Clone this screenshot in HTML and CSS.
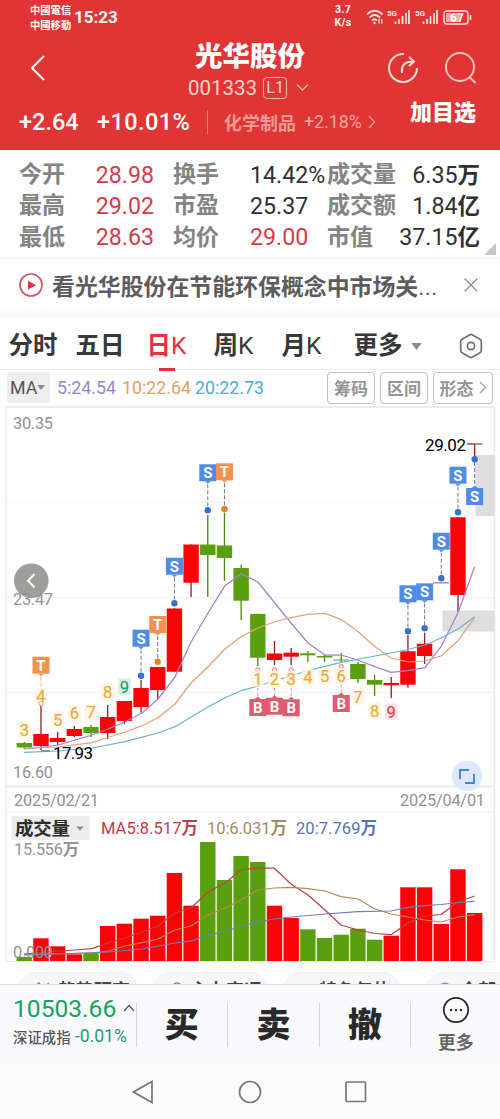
FILE: index.html
```html
<!DOCTYPE html>
<html lang="zh-CN">
<head>
<meta charset="utf-8">
<title>光华股份 001333</title>
<link rel="stylesheet" href="styles.css">
</head>
<body>
<header class="header">
  <div class="status">
    <div class="carrier"><span>中國電信</span><span>中國移動</span></div>
    <div class="clock">15:23</div>
    <div class="net"><span>3.7</span><span>K/s</span></div>
    <svg class="status-icons" width="108" height="20" viewBox="0 0 108 20" fill="none" stroke="#ffe9e6" stroke-width="1.7">
      <path d="M1 6.500Q8.500-1 16.500 6.500M3.500 9.500Q8.500 4.500 14 9.500M6 12.500Q8.500 10 11 12.500" />
      <circle cx="8.500" cy="15" r="1.200" fill="#ffe9e6" stroke="none"/>
      <path d="M13 11v4.500M15.800 11v4.500" stroke-width="1.200"/>
      <text x="21" y="7.500" class="tiny">5G</text><path d="M29.500 16v-2.500M33 16v-5M36.500 16v-8M40 16V5M43 16V2"/>
      <text x="49" y="7.500" class="tiny">5G</text><path d="M57.500 16v-2.500M61 16v-5M64.500 16v-8M68 16V5M71 16V2"/>
      <rect x="78" y="3" width="24" height="13" rx="3" stroke-width="1.300"/><path d="M104.500 7v5" stroke-width="1.500"/>
      <rect x="80" y="5" width="15" height="9" fill="#f6a5a0" stroke="none"/>
      <text x="84" y="14" class="battery">67</text>
    </svg>
  </div>
  <div class="titlebar">
    <svg class="back" width="16" height="26" viewBox="0 0 16 26" fill="none" stroke="#fff" stroke-width="2"><path d="M14 1L2 13l12 12"/></svg>
    <div class="name">
      <h1>光华股份</h1>
      <div class="code"><span>001333</span><i>L1</i><svg width="13" height="9" viewBox="0 0 13 9" fill="none" stroke="#f6b5ae" stroke-width="1.300"><path d="M1 1.500l5.500 5.500L12 1.500"/></svg></div>
    </div>
    <svg class="share" width="34" height="34" viewBox="0 0 34 34" fill="none" stroke="#ffe1dc" stroke-width="2"><path d="M18 3A14 14 0 1 0 31 17"/><path d="M16 22C15 14 19 10.500 27 10.500M23 6l5 4.500-5 4.500"/></svg>
    <svg class="search" width="34" height="34" viewBox="0 0 34 34" fill="none" stroke="#fbc7c0" stroke-width="1.900"><circle cx="16" cy="16" r="14"/><path d="M25.500 26l6 6"/></svg>
  </div>
  <div class="change">
    <b class="delta">+2.64</b><b class="percent">+10.01%</b><i class="bar"></i>
    <span class="sector">化学制品</span><span class="sector-change">+2.18%</span>
    <svg class="chev" width="8" height="14" viewBox="0 0 8 14" fill="none" stroke="#f29b94" stroke-width="1.400"><path d="M1 1l5.500 6L1 13"/></svg>
    <span class="add">加目选</span>
  </div>
</header>

<section class="quotes">
  <span>今开</span><b class="up end">28.98</b><span>换手</span><b>14.42%</b><span>成交量</span><b class="end">6.35<em>万</em></b>
  <span>最高</span><b class="up end">29.02</b><span>市盈</span><b>25.37</b><span>成交额</span><b class="end">1.84<em>亿</em></b>
  <span>最低</span><b class="up end">28.63</b><span>均价</span><b class="up">29.00</b><span>市值</span><b class="end">37.15<em>亿</em></b>
  <svg class="fold" width="12" height="12" viewBox="0 0 12 12"><path d="M12 0v12H0z" fill="#c6c6c8"/></svg>
</section>

<section class="notice">
  <svg width="24" height="24" viewBox="0 0 24 24"><circle cx="12" cy="12" r="11" fill="none" stroke="#d25560" stroke-width="1.700"/><path d="M9 7.800l8 4.400-8 4.300z" fill="#e23040"/></svg>
  <p>看光华股份在节能环保概念中市场关<span>...</span></p>
  <svg width="14" height="14" viewBox="0 0 14 14" stroke="#8f8f8f" stroke-width="1.300"><path d="M.5.5l13 13M13.500.5l-13 13"/></svg>
</section>

<nav class="tabs">
  <a>分时</a><a>五日</a><a class="active">日<span>K</span></a><a>周<span>K</span></a><a>月<span>K</span></a>
  <a>更多</a><svg class="caret" width="11" height="7" viewBox="0 0 12 8"><path d="M0 0h12L6 8z" fill="#8c8c8c"/></svg>
  <svg class="gear" width="24" height="26" viewBox="0 0 24 26" fill="none" stroke="#707070" stroke-width="1.700"><path d="M10.500 1.900Q12 1 13.500 1.900L21 6.200Q22.300 7 22.300 8.500v9Q22.300 19 21 19.800L13.500 24.100Q12 25 10.500 24.100L3 19.800Q1.700 19 1.700 17.500v-9Q1.700 7 3 6.200z"/><circle cx="12" cy="13" r="3.600"/></svg>
</nav>

<section class="indicators">
  <span class="ma">MA<svg width="8" height="5" viewBox="0 0 8 5"><path d="M0 0h8L4 5z" fill="#8c8c8c"/></svg></span>
  <span class="ma5">5:24.54</span><span class="ma10">10:22.64</span><span class="ma20">20:22.73</span>
  <button class="chip">筹码</button><button class="chip">区间</button><button class="chip wide">形态<svg width="8" height="13" viewBox="0 0 8 13" fill="none" stroke="#a0a0a0" stroke-width="1.300"><path d="M1 1l5.500 5.500L1 12"/></svg></button>
</section>

<svg class="chart" id="chart" width="500" height="561" viewBox="0 404 500 561"></svg>

<section class="pills">
  <div class="pill p1"><svg width="20" height="12" viewBox="0 0 20 12" fill="none" stroke="#888" stroke-width="1.500"><path d="M2 4l4-3 4 5 6-5"/></svg>趋势研究</div>
  <div class="pill p2"><svg width="14" height="12" viewBox="0 0 14 12" fill="none" stroke="#888" stroke-width="1.500"><circle cx="6" cy="6" r="5"/></svg>主力实况</div>
  <div class="pill p3">特色与热</div>
  <i></i>
  <div class="pill p4"><svg width="14" height="14" viewBox="0 0 14 14"><circle cx="7" cy="7" r="6.500" fill="#4d9be8"/></svg>全部</div>
</section>

<footer class="trade">
  <div class="index">
    <div class="value">10503.66<svg width="12" height="8" viewBox="0 0 12 8" fill="none" stroke="#555" stroke-width="1.300"><path d="M1 7l5-5.500L11 7"/></svg></div>
    <div class="label"><span>深证成指</span><b>-0.01%</b></div>
  </div>
  <div class="action">买</div><div class="action">卖</div><div class="action">撤</div>
  <div class="more"><svg width="28" height="28" viewBox="0 0 28 28"><circle cx="14" cy="14" r="12.200" fill="none" stroke="#282828" stroke-width="1.800"/><g fill="#282828"><circle cx="9" cy="14" r="1.200"/><circle cx="14" cy="14" r="1.200"/><circle cx="19" cy="14" r="1.200"/></g></svg><span>更多</span></div>
</footer>
<div class="sysnav">
  <svg width="22" height="24" viewBox="0 0 22 24"><path d="M20 1.500v21L1.500 12z"/></svg>
  <svg width="24" height="24" viewBox="0 0 24 24"><circle cx="12" cy="12" r="10.500"/></svg>
  <svg width="22" height="22" viewBox="0 0 22 22"><rect x="1" y="1" width="19.500" height="19.500" rx="1"/></svg>
</div>
<script src="chart.js"></script>
</body>
</html>
```

FILE: styles.css
```css
* { box-sizing: border-box; }
body { margin: 0; width: 500px; height: 1119px; overflow: hidden; background: #fefefe; color: #303030; font-family: Roboto, "Noto Sans CJK SC", sans-serif; white-space: nowrap; }
svg { display: block; flex: none; }
h1, p { margin: 0; }
b { font-weight: 400; }
i, em { font-style: normal; }

.header { height: 150px; background: #e13434; color: #fff; }
.status { display: flex; height: 34px; padding-left: 30px; }
.carrier { display: flex; flex-direction: column; width: 44px; padding-top: 2px; font: 700 10.300px/15px "Noto Sans CJK TC", sans-serif; }
.clock { width: 250px; font-size: 17px; font-weight: 700; line-height: 34px; }
.net { display: flex; flex-direction: column; align-items: center; width: 36px; margin-left: 1px; padding-top: 4px; font-size: 10.500px; font-weight: 700; line-height: 12.500px; letter-spacing: .3px; }
.status-icons { margin: 8px 0 0 5px; }
.tiny { font: 700 8px Roboto, sans-serif; fill: #ffe9e6; stroke: none; }
.battery { font: 700 12px Roboto, sans-serif; fill: #fff; stroke: none; }
.titlebar { display: grid; grid-template-columns: 157px 186px 43px 58px 1fr; height: 69px; align-items: center; }
.back { margin: -2px 0 0 30px; }
.name { grid-column: 2; text-align: center; }
.name h1 { font-size: 27.500px; line-height: 36px; font-weight: 900; margin-top: 2px; }
.code { display: flex; align-items: center; height: 26px; padding-left: 31px; font-size: 20.500px; color: #ffd5ce; }
.code i { width: 24px; height: 22px; margin: 0 9px 0 6px; border: 1.500px solid #f6b5ae; border-radius: 4px; font-size: 16px; line-height: 20px; }
.share { grid-column: 4; margin-top: -2px; }
.search { grid-column: 5; margin-top: -2px; }
.change { display: flex; align-items: center; height: 37px; padding-left: 19px; }
.delta, .percent { font-size: 23.500px; font-weight: 500; }
.delta { width: 78px; }
.percent { width: 110px; letter-spacing: .4px; }
.bar { width: 1px; height: 24px; background: #ee7c78; }
.sector { width: 80px; padding-left: 16px; box-sizing: content-box; font-size: 18px; font-weight: 700; color: #f39a92; }
.sector-change { width: 64px; font-size: 17.800px; color: #f6aaa2; }
.chev { margin-right: 34px; }
.add { font-size: 22px; font-weight: 900; align-self: flex-start; line-height: 20px; }

.quotes { position: relative; display: grid; grid-template-columns: 67px 87px 77px 77px 67px 86px; grid-template-rows: repeat(3, 31.300px); height: 109px; padding: 9px 0 0 19px; align-items: center; border-bottom: 2px solid #f6f6f6; }
.quotes span { font-size: 23px; font-weight: 700; color: #848484; line-height: 31px; }
.quotes b { font-size: 23.200px; line-height: 31px; padding-top: 1px; }
.quotes .up { color: #d63b47; }
.quotes .end { text-align: right; }
.quotes .up.end { padding-right: 19px; }
.quotes em { font-size: 22.500px; font-weight: 700; }
.fold { position: absolute; right: 4px; bottom: 2px; }

.notice { display: flex; align-items: center; height: 52px; padding-left: 19px; }
.notice p { width: 412px; margin-left: 9px; font-size: 22.900px; font-weight: 700; color: #5c5c5c; }
.notice p span { font-weight: 400; letter-spacing: .5px; }

.tabs { display: grid; grid-template-columns: 67px 71px 67px 68px 72px 57px 48px 24px; align-items: center; height: 59px; padding: 4px 0 0 8.500px; border-top: 7px solid #fafafa; border-bottom: 1px solid #eee; font-size: 24.500px; font-weight: 700; color: #383838; }
.tabs a { line-height: 44px; }
.tabs svg { margin-top: 1px; }
.tabs span { font-weight: 400; }
.tabs .active { position: relative; color: #e13540; }
.active::after { content: ""; position: absolute; left: 12px; bottom: -3px; width: 16px; height: 3px; background: #df3340; }

.indicators { display: flex; align-items: center; height: 34px; padding: 1px 0 0 7px; font-size: 17.800px; }
.ma { display: flex; align-items: center; width: 43px; height: 31px; padding-left: 3px; background: #eee; border-radius: 3px; color: #555; }
.ma5 { width: 65px; margin-left: 7px; color: #9887cf; }
.ma10 { width: 73px; color: #e7a062; }
.ma20 { width: 132px; color: #4dacd4; }
.chip { display: flex; flex: none; align-items: center; justify-content: center; width: 48px; height: 32px; margin-right: 5px; padding: 0; background: #fff; border: 1.500px solid #bdbdbd; border-radius: 4px; font: 700 17px "Noto Sans CJK SC", sans-serif; color: #959595; }
.chip.wide { width: 60px; gap: 5px; margin-right: 0; }

.chart text { font-family: Roboto, "Noto Sans CJK SC", sans-serif; }
.chart .axis { font-size: 16.300px; fill: #929292; }
.chart .value { font-size: 17px; fill: #000; }
.chart .tag { font-size: 15px; font-weight: 700; fill: #fff; text-anchor: middle; }
.chart .count { font-size: 16.500px; text-anchor: middle; }
.chart .bold { font-weight: 700; }

.pills { display: flex; height: 19px; padding: 7px 0 0 18px; overflow: hidden; }
.pill { display: flex; flex: none; height: 36px; padding-top: 4px; border: 1px solid #f0f0f0; border-radius: 18px; background: #f7f7f7; font-size: 18px; line-height: 28px; font-weight: 700; color: #444; }
.pill svg { margin: 5px 5px 0 0; }
.p1 { width: 120px; padding-left: 14px; margin-right: 15px; }
.p2 { width: 115px; padding-left: 17px; margin-right: 15px; }
.p3 { width: 117px; padding-left: 35px; }
.pills i { width: 1px; height: 20px; margin: 6px 13px 0; background: #ccc; }
.p4 { width: 120px; padding-left: 11px; }
.p4 svg { margin-right: 8px; }

.trade { display: flex; height: 81px; background: #fafafd; border-top: 1px solid #ddd; }
.index { width: 136px; padding-left: 13px; }
.value { display: flex; align-items: center; height: 34px; margin-top: 6px; font-size: 24.600px; color: #12a462; }
.value svg { margin-left: 7px; }
.label { display: flex; height: 22px; align-items: center; font-size: 14.400px; color: #555; }
.label span { width: 62px; font-weight: 500; }
.label b { font-size: 17.500px; color: #1d9c70; }
.action { width: 92px; height: 44px; margin-top: 18px; border-left: 1px solid #d8d8da; text-align: center; font-size: 34px; line-height: 44px; font-weight: 900; color: #292929; }
.more { display: flex; flex-direction: column; align-items: center; width: 90px; height: 44px; margin-top: 18px; border-left: 1px solid #d8d8da; font-size: 18px; font-weight: 700; color: #666; }
.more svg { margin-top: -7px; }
.more span { line-height: 26px; margin-top: 6px; }
.sysnav { display: flex; align-items: center; height: 54px; padding: 0 0 0 132px; background: #fbfbfb; }
.sysnav svg { fill: none; stroke: #777; stroke-width: 1.700; }
.sysnav svg:nth-child(2) { margin: 0 83px 0 84px; }
```

FILE: chart.js
```js
const RED = '#fb0207', GREEN = '#5a9f0d', BLUE = '#4e8bea', ORANGE = '#f3924f', PINK = '#df5b6e';
const X0 = 24.3, STEP = 16.68, W = 15.4;
const cx = i => X0 + i * STEP;
const parts = [];
const add = s => parts.push(s);
const rect = (x, y, w, h, fill, extra = '') => add(`<rect x="${x}" y="${y}" width="${w}" height="${h}" fill="${fill}" ${extra}/>`);
const line = (x1, y1, x2, y2, stroke, w = 1, extra = '') => add(`<path d="M${x1} ${y1}L${x2} ${y2}" stroke="${stroke}" stroke-width="${w}" ${extra}/>`);
const text = (x, y, s, cls, len, extra = '') => add(`<text x="${x}" y="${y}" class="${cls}" ${len ? `textLength="${len}"` : ''} ${extra}>${s}</text>`);
const curve = (pts, stroke) => add(`<polyline points="${pts}" fill="none" stroke="${stroke}" stroke-width="1.25" stroke-linejoin="round"/>`);

// Frame and guide lines
line(0, 404, 500, 404, '#f4f4f4');
line(6, 407, 494.5, 407, '#e6e6e6', 1.4);
line(6, 407, 6, 961, '#ececec', 1.5);
line(494.5, 407, 494.5, 961, '#ececec', 1.5);
line(6, 786.5, 494, 786.5, '#e8e8e8', 1.5);
line(6, 812, 494, 812, '#f1f1f1');
line(6, 961.5, 494, 961.5, '#e8e8e8');
[502.5, 597.5, 692.5].forEach(y => line(7, y, 494, y, '#f2f2f2'));
rect(475.5, 455, 19, 61, '#dedede');
rect(442.5, 610.5, 52, 21, '#dedede');

// Candles: [body top, body bottom, high, low, rising]
const candles = [
  [743, 747.5, 742, 749, 0], [734, 746, 706, 750, 1], [738, 742, 732, 745, 1], [729, 736, 726, 737, 1],
  [727, 733, 724.7, 737, 0], [717, 733, 705, 739, 1], [701, 721, 701, 724, 1], [688, 707, 680, 712.7, 1],
  [667, 690, 667, 699, 1], [608.5, 671.7, 608, 672, 1], [544.5, 582.7, 544.5, 597, 1], [544.5, 555, 515, 597, 0],
  [545.5, 558, 512.7, 581, 0], [568, 600.7, 564.7, 620, 0], [614, 657.7, 613.5, 666, 0], [653.5, 660, 641, 665, 1],
  [652.7, 656.7, 648, 665, 1], [653.3, 655.3, 651, 662, 0], [656, 657.5, 654, 662, 0], [659.5, 660.5, 653, 662, 0],
  [664, 679, 662, 683, 0], [680, 684.7, 674.7, 696, 0], [683, 685.2, 677, 698, 1], [651.3, 684.7, 635, 687.7, 1],
  [643.7, 656, 632.7, 664, 1], null, [517.3, 595, 517, 611.7, 1], [443.3, 444.7, 444, 457, 1]
];
candles.forEach((c, i) => {
  if (!c) { line(433, 582.8, 449, 582.8, '#b27cb7', 1.4); return; }
  const [t, b, h, l, up] = c;
  line(cx(i), h, cx(i), l, up ? '#8d2025' : '#4b870c', 1.3);
  rect(cx(i) - W / 2, t, W, b - t, i === 27 ? '#b55559' : up ? RED : GREEN);
});

curve('24,749 41,747.5 58,745 75,740 92,735 108,729 125,722 142,713 158,699 175,677 191,642 208,613 225,585.7 241,573.7 258,582 274,602 291,623 308,643 325,655 341,655 357.500,660 375,666.7 391,672.3 408,670.7 425,667.7 441,646.7 458,612.7 474.600,566.7', '#a083cb');
curve('24,748 58,747 92,742.7 108,737.5 125,732 142,725.7 158,717.7 175,704 191,683 208,666.7 225,649 241,636.7 258,628 274,622 291,617.7 308,614.3 325,613.3 341,619.3 357.500,631.3 375,646.7 391,658 408,662 425,661 441,656 458,640.7 474.600,617.7', '#e0a477');
curve('24,752.3 58,751 92,748 125,741.7 158,733 175,726.7 208,707 225,697.7 241,690.7 258,686 274,681 308,670.7 341,662.3 375,656 391,653 408,649.5 425,645 441,638 458,629 474.600,617', '#69b4d0');

// Trade markers above price: [index, letter, box top, dot y]
[[7, 'S', 629.7, 675.7], [8, 'T', 616, 661.7], [9, 'S', 557.7, 603.3], [11, 'S', 464.3, 510.3], [12, 'T', 463.3, 509],
 [23, 'S', 585.3, 631.3], [24, 'S', 583.3, 628.3], [25, 'S', 532.7, 578.3], [26, 'S', 466.7, 512.3], [1, 'T', 656.7, 0]].forEach(([i, s, y, dot]) => {
  const x = cx(i), c = s === 'S' ? BLUE : ORANGE;
  line(x, y + 20, x, dot || 706, dot ? '#77797f' : '#e9b18f', 1, 'stroke-dasharray="4 2"');
  rect(x - 8.5, y, 17, 17, c);
  add(`<path d="M${x - 3} ${y + 17}h6l-3 2.500z" fill="${c}"/>`);
  text(x, y + 14, s, 'tag');
  if (dot) add(`<circle cx="${x}" cy="${dot}" r="3.200" fill="${s === 'S' ? '#3573cf' : '#df8531'}"/>`);
});
line(cx(27), 462, cx(27), 486, '#6c7890', 1, 'stroke-dasharray="4 2"');
rect(cx(27) - 8.5, 488, 17, 17, BLUE);
add(`<path d="M${cx(27) - 3} 488h6l-3-2.500z" fill="${BLUE}"/><circle cx="${cx(27)}" cy="459.300" r="3.200" fill="#3573cf"/>`);
text(cx(27), 502, 'S', 'tag');

// Buy markers below price
[[14, 699, 670], [15, 697.7, 670], [16, 699.3, 670], [19, 695, 666.5]].forEach(([i, y, top]) => {
  const x = cx(i);
  line(x, top + 3, x, y, '#e497a1', 1, 'stroke-dasharray="3 2"');
  add(`<circle cx="${x}" cy="${top}" r="2" fill="#fff" stroke="#eda0a5" stroke-width="1.300"/>`);
  rect(x - 8.5, y, 17, 17, PINK);
  add(`<path d="M${x - 3} ${y}h6l-3-2.500z" fill="${PINK}"/>`);
  text(x, y + 14, 'B', 'tag');
});

// Sequence counts: [index, digit, centre y]
[[0, 3, 729.5], [1, 4, 696], [2, 5, 719.5], [3, 6, 713], [4, 7, 712], [5, 8, 692], [6, 9, 686.5, '#16a46c', '#d5f0e2'],
 [14, 1, 678.5], [15, 2, 679], [16, 3, 679], [17, 4, 677], [18, 5, 676], [19, 6, 676], [20, 7, 696.5], [21, 8, 710.5], [22, 9, 711.5, '#d94350', '#ffdfe0']].forEach(([i, n, y, fg = '#e5ac3f', bg = '#fff5df']) => {
  rect(cx(i) - 6.5, y - 8, 13, 16, bg, 'rx="2" opacity=".85"');
  text(cx(i), y + 6, n, 'count', 0, `fill="${fg}" stroke="${fg}" stroke-width=".2"`);
});
add(`<circle cx="41" cy="703.500" r="2" fill="#fff" stroke="#edb087" stroke-width="1.200"/>`);

// Price labels
text(13, 429.2, '30.35', 'axis', 40);
add('<circle cx="31.300" cy="580.700" r="17.300" fill="#8d8d8b" fill-opacity=".85"/><path d="M34.500 574l-6.500 6.700 6.500 6.700" fill="none" stroke="#fff" stroke-width="2"/>');
text(13, 604.6, '23.47', 'axis', 40);
text(13, 778.3, '16.60', 'axis', 40);
text(53, 759.4, '17.93', 'value', 40);
line(41, 750.8, 50, 750.8, '#397489');
text(425, 450.6, '29.02', 'value', 41);
line(467, 443.3, 475, 444, '#b55559');
text(14, 805.7, '2025/02/21', 'axis', 85);
text(400, 805.7, '2025/04/01', 'axis', 85);
add('<circle cx="467.200" cy="776" r="15.200" fill="#dce8fc"/><path d="M469 770h-9v9M465 783h9v-9" fill="none" stroke="#3e87d8" stroke-width="1.900"/>');

// Volume header
rect(11.5, 816, 78, 24, '#ededed');
text(15, 835, '成交量', 'bold', 55, 'font-size="18.500" fill="#2c2c2c"');
add('<path d="M76 826.500h8l-4 4z" fill="#8c8c8c"/>');
text(101, 834.3, 'MA5:8.517<tspan class="bold">万</tspan>', '', 97, 'font-size="16.500" fill="#bd3f47"');
text(207, 834.3, '10:6.031<tspan class="bold">万</tspan>', '', 80, 'font-size="16.500" fill="#a78a63"');
text(296, 834.3, '20:7.769<tspan class="bold">万</tspan>', '', 81, 'font-size="16.500" fill="#5871bd"');
text(14, 855, '15.556<tspan class="bold">万</tspan>', 'axis', 65);

// Volume bars: column top and direction
const volumes = [957, 938.3, 946.3, 954.3, 953, 926, 923.7, 918.7, 915.7, 873, 905.7, 842, 880, 856, 862, 905.7, 918, 929.3, 938, 934.7, 928.7, 939.7, 935.7, 887.3, 887.3, 924, 869.3, 913];
const falling = new Set([0, 4, 11, 12, 13, 14, 17, 18, 19, 20, 21]);
volumes.forEach((y, i) => rect(cx(i) - W / 2, y, W, 961 - y, falling.has(i) ? GREEN : RED));
curve('24,954 58,951 75,950 92,948.7 108,943 125,938 142,932 158,926 175,913 191,908 208,892 225,883 241,870 258,868 274,868 291,884 308,895 325,910 341,925 358,930 375,933.5 391,934.7 408,923 425,916 441,914.500 458,902 474.600,896', '#b84242');
curve('24,954.500 92,953 108,951 125,946 142,942.7 158,939 175,930 191,926 208,915 225,908 241,900 258,890 274,888 291,887.3 308,888.7 325,891 341,896.7 358,899 375,909 391,914 408,917 425,920 441,922 458,917 474.600,914.700', '#b38c55');
curve('24,955 58,954 108,952 142,949 175,943 191,941 208,935 225,931.500 241,926 258,922 274,919 291,917 325,914 358,911.7 391,911 408,907.3 425,905.7 441,904.500 458,902.500 474.600,901.3', '#6e80b8');
text(13, 958, '0.000', 'axis', 40);

document.getElementById('chart').innerHTML = parts.join('');
```
